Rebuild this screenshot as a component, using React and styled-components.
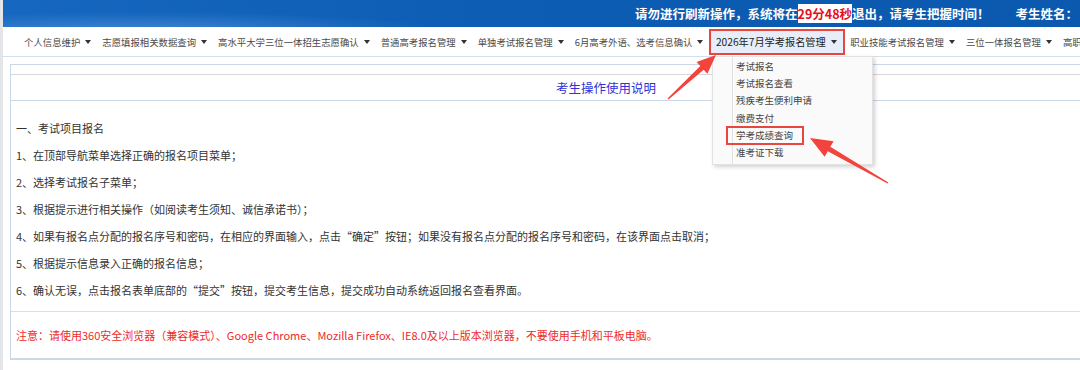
import React from 'react';
import styled, { createGlobalStyle, css } from 'styled-components';

const Global = createGlobalStyle`
  html, body { margin: 0; padding: 0; background: #fff; overflow: hidden; }
  body { font-family: "Noto Sans CJK SC", "Noto Sans", sans-serif; }
  #root { width: 1080px; height: 370px; overflow: hidden; }
`;

const Page = styled.div`
  position: relative;
  width: 1200px;
  height: 370px;
  box-sizing: border-box;
  border-left: 3px solid #e3e5e9;
  background: #fff;
`;

const Header = styled.header`
  height: 27px;
  display: flex;
  align-items: center;
  gap: 26px;
  padding-left: 632px;
  background:
    radial-gradient(ellipse 420px 26px at 140px 30px, rgba(110, 170, 235, 0.45), rgba(110, 170, 235, 0) 70%),
    linear-gradient(90deg, #1667bf 0%, #0d5db4 40%, #0a58ae 100%);
  color: #fff;
  font-weight: 700;
  font-size: 12.5px;
  white-space: nowrap;
`;

const Countdown = styled.span`
  background: #fff;
  color: #e60f1b;
`;

const NavBar = styled.nav`
  height: 30px;
  box-sizing: border-box;
  display: flex;
  align-items: center;
  padding-left: 15.5px;
  border-bottom: 1px solid #d3dfec;
  white-space: nowrap;
`;

const NavItem = styled.div`
  position: relative;
  display: flex;
  align-items: center;
  gap: 5px;
  height: 26px;
  box-sizing: border-box;
  padding: 0 5.5px;
  font-size: 9.4px;
  color: #4a4a4a;
  ${p => p.$active && css`
    padding: 0 6px 0 5px;
    border: 2px solid #e8473f;
    background: #e7eef9;
    color: #222;
    font-size: 10.2px;
  `}
`;

const Caret = styled.span`
  width: 0;
  height: 0;
  border-left: 3px solid transparent;
  border-right: 3px solid transparent;
  border-top: 4px solid #333;
`;

const Menu = styled.ul`
  position: absolute;
  left: 1px;
  top: calc(100% + 3px);
  width: 161px;
  box-sizing: border-box;
  margin: 0;
  padding: 1px 0 2px;
  list-style: none;
  background: #fafafa;
  border: 1px solid #e2e2e2;
  box-shadow: 2px 2px 4px rgba(0, 0, 0, 0.18);
  z-index: 5;
  &::before {
    content: '';
    position: absolute;
    left: 19px;
    top: 0;
    bottom: 0;
    border-left: 1px solid #e0e0e0;
    border-right: 1px solid #fff;
  }
`;

const MenuItem = styled.li`
  position: relative;
  height: 17.4px;
  line-height: 17.4px;
  padding-left: 23px;
  font-size: 9.5px;
  color: #444;
  ${p => p.$marked && css`
    &::after {
      content: '';
      position: absolute;
      left: 13px;
      width: 78px;
      top: -1px;
      bottom: -1px;
      box-sizing: border-box;
      border: 2px solid #e8473f;
    }
  `}
`;

const Panel = styled.section`
  margin: 7px 0 0 7px;
  width: 1190px;
  border: 1px solid #c9d7e6;
  border-bottom: 2px solid #cdd8e4;
`;

const TopStrip = styled.div`
  height: 9px;
  border-bottom: 1px solid #d8d8d8;
`;

const TitleRow = styled.div`
  height: 25px;
  display: flex;
  align-items: center;
  justify-content: center;
  border-bottom: 1px solid #c9d7e6;
  color: #3131d6;
  font-size: 12.5px;
`;

const Body = styled.div`
  padding: 14px 5px 7px;
  border-bottom: 1px solid #d5e0ec;
`;

const Para = styled.p`
  margin: 0;
  line-height: 27px;
  font-size: 11px;
  color: #333;
  white-space: nowrap;
`;

const NoteRow = styled.div`
  height: 46px;
  display: flex;
  align-items: center;
  padding-left: 5px;
  font-size: 11px;
  color: #ee2a2a;
  white-space: nowrap;
`;

const Overlay = styled.svg`
  position: absolute;
  left: -3px;
  top: 0;
  width: 1080px;
  height: 370px;
  pointer-events: none;
  z-index: 10;
`;

function arrowPoints(tail, tip, headLen, headW, w0, w1) {
  const dx = tip[0] - tail[0];
  const dy = tip[1] - tail[1];
  const len = Math.hypot(dx, dy);
  const ux = dx / len, uy = dy / len;
  const nx = -uy, ny = ux;
  const bx = tip[0] - ux * headLen, by = tip[1] - uy * headLen;
  const p = (x, y) => `${x.toFixed(1)},${y.toFixed(1)}`;
  return [
    p(tail[0] + nx * w0 / 2, tail[1] + ny * w0 / 2),
    p(bx + nx * w1 / 2, by + ny * w1 / 2),
    p(bx + nx * headW / 2, by + ny * headW / 2),
    p(tip[0], tip[1]),
    p(bx - nx * headW / 2, by - ny * headW / 2),
    p(bx - nx * w1 / 2, by - ny * w1 / 2),
    p(tail[0] - nx * w0 / 2, tail[1] - ny * w0 / 2),
  ].join(' ');
}

const navItems = [
  '个人信息维护',
  '志愿填报相关数据查询',
  '高水平大学三位一体招生志愿确认',
  '普通高考报名管理',
  '单独考试报名管理',
  '6月高考外语、选考信息确认',
  '2026年7月学考报名管理',
  '职业技能考试报名管理',
  '三位一体报名管理',
  '高职提前招生报名管理',
];

const menuItems = ['考试报名', '考试报名查看', '残疾考生便利申请', '缴费支付', '学考成绩查询', '准考证下载'];

const paras = [
  '一、考试项目报名',
  '1、在顶部导航菜单选择正确的报名项目菜单；',
  '2、选择考试报名子菜单；',
  '3、根据提示进行相关操作（如阅读考生须知、诚信承诺书）；',
  '4、如果有报名点分配的报名序号和密码，在相应的界面输入，点击“确定”按钮；如果没有报名点分配的报名序号和密码，在该界面点击取消；',
  '5、根据提示信息录入正确的报名信息；',
  '6、确认无误，点击报名表单底部的“提交”按钮，提交考生信息，提交成功自动系统返回报名查看界面。',
];

export default function App() {
  return (
    <>
      <Global />
      <Page>
        <Header>
          <span>
            请勿进行刷新操作，系统将在<Countdown>29分48秒</Countdown>退出，请考生把握时间！
          </span>
          <span>考生姓名：</span>
        </Header>
        <NavBar>
          {navItems.map((t, i) => (
            <NavItem key={t} $active={i === 6}>
              <span>{t}</span>
              <Caret />
              {i === 6 && (
                <Menu>
                  {menuItems.map(m => (
                    <MenuItem key={m} $marked={m === '学考成绩查询'}>{m}</MenuItem>
                  ))}
                </Menu>
              )}
            </NavItem>
          ))}
        </NavBar>
        <Panel>
          <TopStrip />
          <TitleRow>考生操作使用说明</TitleRow>
          <Body>
            {paras.map(p => <Para key={p}>{p}</Para>)}
          </Body>
          <NoteRow>
            注意：请使用360安全浏览器（兼容模式）、Google Chrome、Mozilla Firefox、IE8.0及以上版本浏览器，不要使用手机和平板电脑。
          </NoteRow>
        </Panel>
        <Overlay viewBox="0 0 1080 370">
          <polygon points={arrowPoints([668, 99], [716, 55], 19, 16, 1.5, 5)} fill="#f2433d" />
          <polygon points={arrowPoints([888, 183], [810, 138], 22, 18, 1.5, 5)} fill="#f2433d" />
        </Overlay>
      </Page>
    </>
  );
}
